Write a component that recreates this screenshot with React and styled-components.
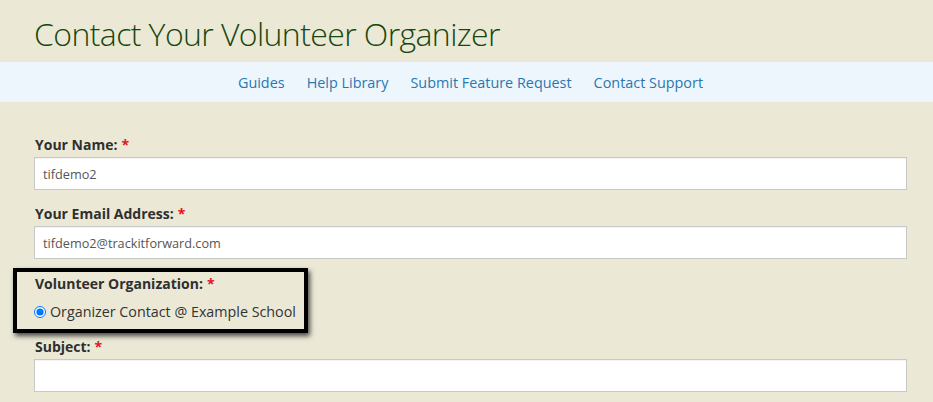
import React from "react";
import styled, { createGlobalStyle } from "styled-components";

const Global = createGlobalStyle`
  html, body { margin: 0; padding: 0; }
  body {
    background: #ebe9d6;
    font-family: "Open Sans", "Liberation Sans", sans-serif;
    color: #333;
  }
`;

const Header = styled.header`
  padding: 11px 0 6px 34px;
`;

const Title = styled.h1`
  margin: 0;
  font-size: 32px;
  letter-spacing: -0.6px;
  font-weight: 300;
  color: #18470d;
  line-height: 45px;
`;

const Nav = styled.nav`
  height: 40px;
  background: #eef6fd;
  display: flex;
  align-items: center;
  justify-content: center;
  gap: 22px;
  padding-left: 8px;
`;

const NavLink = styled.a`
  font-size: 14.4px;
  color: #2878b0;
  text-decoration: none;
  cursor: pointer;
`;

const Form = styled.form`
  padding: 33px 26px 0 34px;
  display: flex;
  flex-direction: column;
`;

const Field = styled.div`
  display: flex;
  flex-direction: column;
  margin-top: ${(p) => p.$mt || 0}px;
`;

const Label = styled.label`
  font-size: 14px;
  font-weight: 700;
  line-height: 20px;
  color: #2f2f2f;
  padding-left: 1px;
`;

const Req = styled.span`
  color: #e0141e;
  margin-left: 4px;
`;

const Input = styled.input`
  box-sizing: border-box;
  margin-top: 2px;
  height: 33px;
  width: 100%;
  border: 1px solid #c8c8c8;
  background: #fff;
  padding: 0 8px;
  font-family: "Open Sans", "Liberation Sans", sans-serif;
  font-size: 12.7px;
  color: #555;
  outline: none;
  box-shadow: inset 0 1px 1px rgba(0, 0, 0, 0.05);
`;

const Highlight = styled.div`
  align-self: flex-start;
  margin: 9px 0 0 -21px;
  border: 4px solid #000;
  padding: 2px 8px 7px 17px;
  box-shadow: 2px 3px 5px rgba(0, 0, 0, 0.7);
  display: flex;
  flex-direction: column;
`;

const RadioRow = styled.label`
  margin-top: 8px;
  display: flex;
  align-items: center;
  font-size: 14.3px;
  line-height: 20px;
  color: #333;
`;

const Radio = styled.input`
  margin: 0 4px 0 0;
  width: 12px;
  height: 12px;
`;

export default function App() {
  return (
    <>
      <Global />
      <Header>
        <Title>Contact Your Volunteer Organizer</Title>
      </Header>
      <Nav>
        <NavLink>Guides</NavLink>
        <NavLink>Help Library</NavLink>
        <NavLink>Submit Feature Request</NavLink>
        <NavLink>Contact Support</NavLink>
      </Nav>
      <Form onSubmit={(e) => e.preventDefault()}>
        <Field>
          <Label>
            Your Name:<Req>*</Req>
          </Label>
          <Input defaultValue="tifdemo2" />
        </Field>
        <Field $mt={14}>
          <Label>
            Your Email Address:<Req>*</Req>
          </Label>
          <Input defaultValue="tifdemo2@trackitforward.com" />
        </Field>
        <Highlight>
          <Label>
            Volunteer Organization:<Req>*</Req>
          </Label>
          <RadioRow>
            <Radio type="radio" name="org" defaultChecked />
            Organizer Contact @ Example School
          </RadioRow>
        </Highlight>
        <Field $mt={4}>
          <Label>
            Subject:<Req>*</Req>
          </Label>
          <Input />
        </Field>
      </Form>
    </>
  );
}
